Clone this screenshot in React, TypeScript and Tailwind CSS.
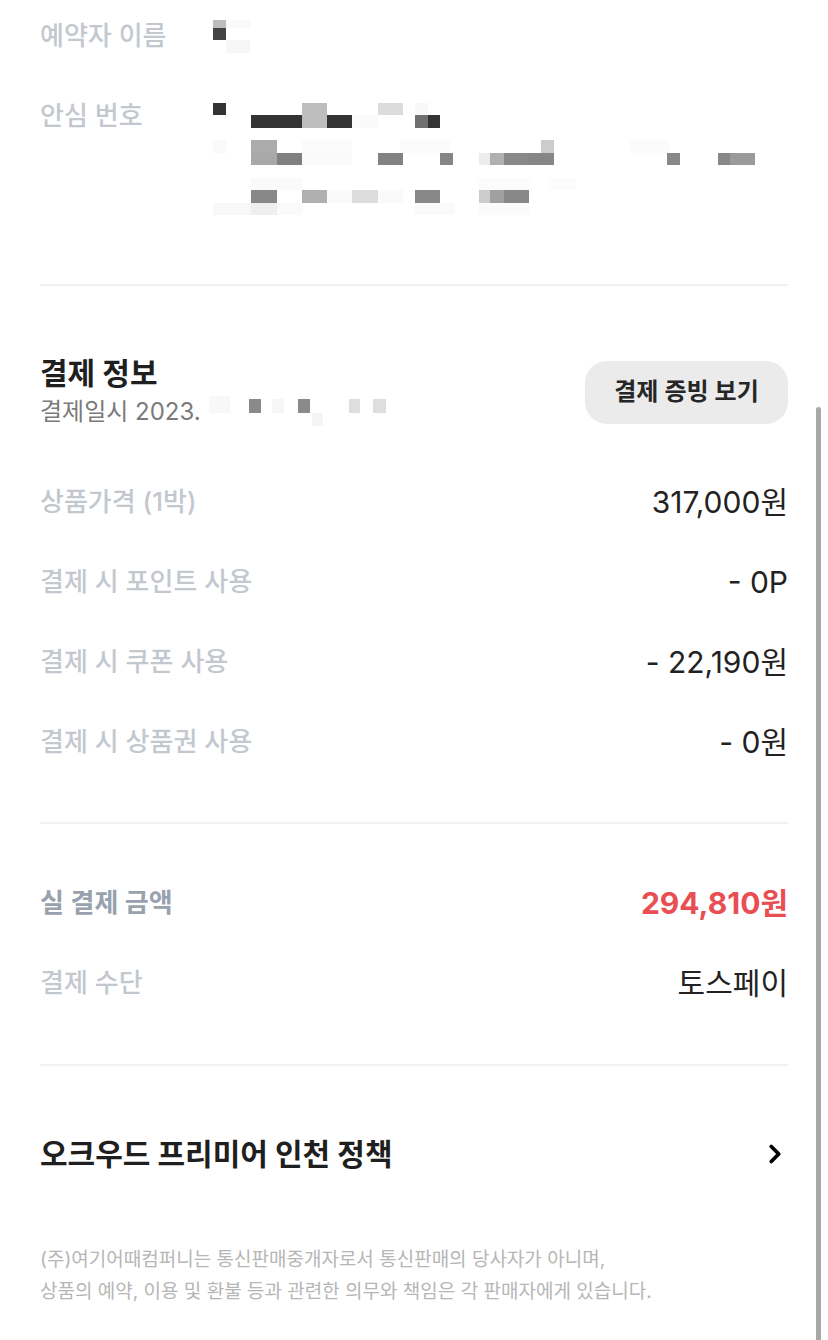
import { ChevronRight } from 'lucide-react';

type Block = [number, number, number, number, string];

// censored mosaic pieces, in page coordinates
const nameBlocks: Block[] = [
  [213, 20, 13, 8, '#bdbdbd'],
  [213, 28, 13, 12, '#444444'],
  [226, 20, 24, 8, '#f9f9f9'],
  [226, 40, 24, 13, '#f7f7f7'],
];

const phoneBlocks: Block[] = [
  [213, 103, 13, 12, '#333333'],
  [251, 115, 51, 13, '#333333'],
  [302, 103, 25, 25, '#bdbdbd'],
  [327, 115, 25, 13, '#333333'],
  [352, 115, 26, 13, '#fafafa'],
  [378, 103, 25, 12, '#dcdcdc'],
  [415, 103, 13, 12, '#f8f8f8'],
  [415, 115, 13, 13, '#707070'],
  [428, 115, 12, 13, '#333333'],
  [213, 140, 13, 13, '#fafafa'],
  [251, 140, 26, 13, '#ababab'],
  [302, 140, 50, 13, '#fbfbfb'],
  [400, 140, 50, 13, '#fbfbfb'],
  [541, 140, 13, 13, '#cccccc'],
  [630, 140, 40, 13, '#fbfbfb'],
  [251, 153, 26, 12, '#a8a8a8'],
  [277, 153, 25, 12, '#808080'],
  [302, 153, 50, 12, '#fafafa'],
  [378, 153, 25, 12, '#828282'],
  [440, 153, 13, 12, '#858585'],
  [479, 153, 11, 12, '#ececec'],
  [490, 153, 14, 12, '#b0b0b0'],
  [504, 153, 25, 12, '#898989'],
  [529, 153, 25, 12, '#868686'],
  [667, 153, 13, 12, '#888888'],
  [718, 153, 12, 12, '#888888'],
  [730, 153, 25, 12, '#9a9a9a'],
  [251, 178, 51, 12, '#fafafa'],
  [479, 178, 50, 12, '#fbfbfb'],
  [551, 178, 25, 12, '#fbfbfb'],
  [251, 190, 26, 13, '#888888'],
  [302, 190, 25, 13, '#b0b0b0'],
  [327, 190, 25, 13, '#fafafa'],
  [352, 190, 26, 13, '#dddddd'],
  [378, 190, 25, 13, '#fafafa'],
  [415, 190, 25, 13, '#888888'],
  [479, 190, 11, 13, '#cccccc'],
  [490, 190, 14, 13, '#a0a0a0'],
  [504, 190, 25, 13, '#888888'],
  [213, 203, 38, 12, '#f8f8f8'],
  [251, 203, 26, 12, '#efefef'],
  [277, 203, 25, 12, '#fafafa'],
  [415, 203, 40, 12, '#fafafa'],
  [479, 203, 50, 12, '#fbfbfb'],
];

const dateBlocks: Block[] = [
  [213, 397, 21, 17, '#f8f8f8'],
  [253, 400, 12, 14, '#8a8a8a'],
  [276, 400, 12, 14, '#f6f6f6'],
  [302, 400, 12, 14, '#8a8a8a'],
  [316, 414, 11, 13, '#f5f5f5'],
  [353, 400, 11, 14, '#dedede'],
  [377, 400, 13, 14, '#dedede'],
];

const Mosaic = ({ blocks, box, className }: { blocks: Block[]; box: [number, number, number, number]; className?: string }) => (
  <svg
    className={className}
    width={box[2]}
    height={box[3]}
    viewBox={box.join(' ')}
    shapeRendering="crispEdges"
  >
    {blocks.map(([x, y, w, h, c], i) => (
      <rect key={i} x={x} y={y} width={w} height={h} fill={c} />
    ))}
  </svg>
);

const Divider = ({ className = '' }: { className?: string }) => (
  <div className={`h-[2px] bg-[#f1f1f1] ${className}`} />
);

const Row = ({ label, value, strong }: { label: string; value: string; strong?: boolean }) => (
  <div className="flex h-[80px] items-center justify-between">
    <span
      className={`text-[26px] leading-[40px] ${
        strong ? 'font-semibold text-[#98a2ae]' : 'font-medium text-[#c3c8cf]'
      }`}
    >
      {label}
    </span>
    <span
      className={`text-[30px] leading-[40px] ${
        strong ? 'font-bold text-[#e94f52]' : 'text-[#222222]'
      }`}
    >
      {value}
    </span>
  </div>
);

export default function App() {
  return (
    <div className="relative min-h-[1340px] overflow-hidden bg-white font-['Inter','Noto_Sans_CJK_KR',sans-serif]">
      <div className="px-[40px] pt-[16px]">
        {/* 예약자 정보 */}
        <div className="flex h-[40px] items-start">
          <span className="w-[173px] text-[26px] font-medium leading-[40px] text-[#c3c8cf]">
            예약자 이름
          </span>
          <Mosaic blocks={nameBlocks} box={[213, 16, 40, 40]} />
        </div>
        <div className="mt-[40px] flex items-start">
          <span className="w-[173px] text-[26px] font-medium leading-[40px] text-[#c3c8cf]">
            안심 번호
          </span>
          <Mosaic className="mt-[4px]" blocks={phoneBlocks} box={[213, 100, 560, 120]} />
        </div>

        <Divider className="mt-[64px]" />

        {/* 결제 정보 */}
        <div className="mt-[69px] flex items-center justify-between">
          <div>
            <h2 className="text-[30px] font-bold leading-[36px] text-[#1f1f1f]">결제 정보</h2>
            <div className="mt-[3px] flex items-center">
              <span className="text-[24px] leading-[32px] text-[#7a7a7a]">결제일시 2023.</span>
              <Mosaic blocks={dateBlocks} box={[205, 395, 190, 35]} />
            </div>
          </div>
          <button className="flex h-[63px] w-[203px] items-center justify-center rounded-[22px] bg-[#ebebeb] text-[24px] font-semibold text-[#262626]">
            결제 증빙 보기
          </button>
        </div>

        <div className="mt-[33px]">
          <Row label="상품가격 (1박)" value="317,000원" />
          <Row label="결제 시 포인트 사용" value="- 0P" />
          <Row label="결제 시 쿠폰 사용" value="- 22,190원" />
          <Row label="결제 시 상품권 사용" value="- 0원" />
        </div>

        <Divider className="mt-[40px]" />

        <div className="mt-[39px]">
          <Row label="실 결제 금액" value="294,810원" strong />
          <Row label="결제 수단" value="토스페이" />
        </div>

        <Divider className="mt-[41px]" />

        {/* 정책 */}
        <div className="mt-[48px] flex h-[80px] items-center justify-between">
          <span className="text-[30px] font-bold text-[#1f1f1f]">오크우드 프리미어 인천 정책</span>
          <ChevronRight className="mr-[-2px] h-[30px] w-[30px] text-black" strokeWidth={3} />
        </div>

        <p className="mt-[50px] text-[19px] leading-[32px] text-[#b6b6b6]">
          (주)여기어때컴퍼니는 통신판매중개자로서 통신판매의 당사자가 아니며,
          <br />
          상품의 예약, 이용 및 환불 등과 관련한 의무와 책임은 각 판매자에게 있습니다.
        </p>
      </div>

      {/* scrollbar overlay */}
      <div className="absolute bottom-0 right-[7px] top-[407px] w-[5px] rounded-t-full bg-[#a8a8a8]" />
    </div>
  );
}
